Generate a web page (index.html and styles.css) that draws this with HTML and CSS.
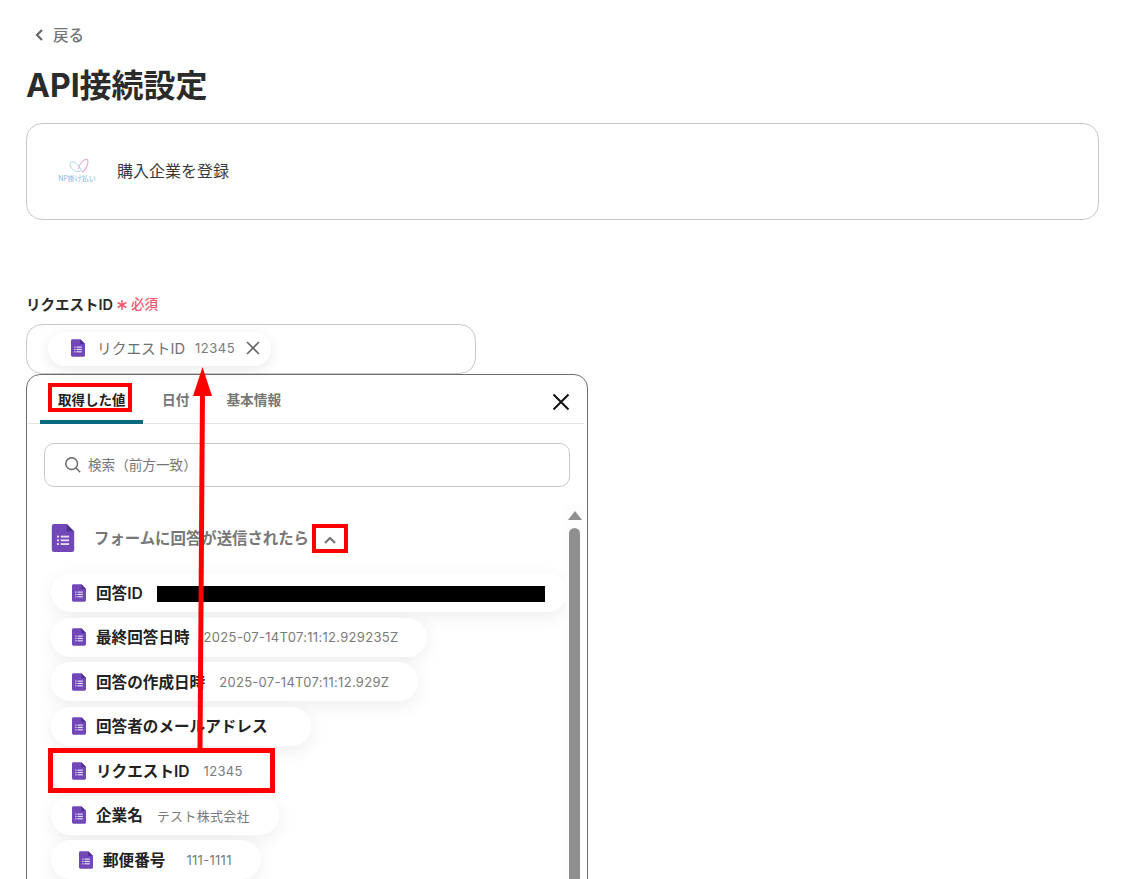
FILE: index.html
```html
<!DOCTYPE html>
<html lang="ja">
<head>
<meta charset="utf-8">
<title>API接続設定</title>
<link rel="stylesheet" href="styles.css">
</head>
<body>
<svg class="defs" width="0" height="0" aria-hidden="true">
  <symbol id="form" viewBox="0 0 24 30">
    <path d="M2.5 0H16l8 8v19.5a2.5 2.5 0 0 1-2.500 2.500h-19A2.500 2.500 0 0 1 0 27.500v-25A2.500 2.500 0 0 1 2.500 0z" fill="#7248b9"/>
    <path d="M16 0l8 8h-8z" fill="#4f2f8f"/>
    <g fill="#e6dcf5"><rect x="5.500" y="12.500" width="2.200" height="2"/><rect x="9.500" y="12.500" width="9" height="2"/><rect x="5.500" y="16.500" width="2.200" height="2"/><rect x="9.500" y="16.500" width="9" height="2"/><rect x="5.500" y="20.500" width="2.200" height="2"/><rect x="9.500" y="20.500" width="9" height="2"/></g>
  </symbol>
</svg>
<main class="page">
  <a class="back"><svg class="back-icon" viewBox="0 0 10 14"><path d="M8 2L3 7l5 5" fill="none" stroke="#666" stroke-width="2.200"/></svg><span class="lift">戻る</span></a>
  <h1 class="title">API接続設定</h1>
  <section class="card">
    <div class="logo">
      <svg class="logo-mark" viewBox="0 0 32 20"><path d="M8 5c5-3 10 4 13 9 1 3-7 3-11-1C7 10 7 6 8 5z" fill="none" stroke="#a5d2ee" stroke-width="1.200"/><path d="M18 13c0-6 6-12 10-12 3 2 1 12-6 16" fill="none" stroke="#e8a7cf" stroke-width="1.300"/></svg>
      <span class="logo-text">NP掛け払い</span>
    </div>
    <span class="card-text lift">購入企業を登録</span>
  </section>

  <label class="field-label"><span class="lift-s">リクエストID</span><span class="req"><svg class="req-star" viewBox="0 0 10 10"><path d="M5 0v10M.7 2.500l8.600 5M9.300 2.500l-8.600 5" stroke="#f4566a" stroke-width="1.500" fill="none"/></svg><span class="lift-s">必須</span></span></label>
  <div class="input">
    <div class="chip">
      <svg class="ic chip-ic"><use href="#form"/></svg>
      <span class="chip-name">リクエストID</span>
      <span class="chip-val">12345</span>
      <svg class="chip-x" viewBox="0 0 14 14"><path d="M1 1l12 12M13 1L1 13" stroke="#666" stroke-width="1.600" fill="none"/></svg>
    </div>
  </div>

  <section class="pop">
    <div class="tabs">
      <span class="tab tab-on"><span class="lift">取得した値</span></span>
      <span class="tab"><span class="lift">日付</span></span>
      <span class="tab"><span class="lift">基本情報</span></span>
      <svg class="close" viewBox="0 0 18 18"><path d="M1.500 1.500l15 15M16.500 1.500l-15 15" stroke="#111" stroke-width="2" fill="none"/></svg>
    </div>
    <div class="search">
      <svg class="search-ic" viewBox="0 0 20 20"><circle cx="8.500" cy="8.500" r="6.500" fill="none" stroke="#666" stroke-width="1.600"/><path d="M13.300 13.300L18 18" stroke="#666" stroke-width="1.600"/></svg>
      <span class="lift-s">検索（前方一致）</span>
    </div>
    <div class="body">
      <div class="list">
        <div class="group">
          <svg class="group-ic"><use href="#form"/></svg>
          <span class="group-name lift-s">フォームに回答が送信されたら</span>
          <svg class="chev" viewBox="0 0 14 9"><path d="M2 7l5-5 5 5" fill="none" stroke="#777" stroke-width="2.200"/></svg>
        </div>
        <div class="row"><svg class="ic"><use href="#form"/></svg><b>回答ID</b><i class="redact"></i></div>
        <div class="row"><svg class="ic"><use href="#form"/></svg><b>最終回答日時</b><span class="val">2025-07-14T07:11:12.929235Z</span></div>
        <div class="row"><svg class="ic"><use href="#form"/></svg><b>回答の作成日時</b><span class="val">2025-07-14T07:11:12.929Z</span></div>
        <div class="row"><svg class="ic"><use href="#form"/></svg><b>回答者のメールアドレス</b><span class="val"></span></div>
        <div class="row"><svg class="ic"><use href="#form"/></svg><b>リクエストID</b><span class="val">12345</span></div>
        <div class="row"><svg class="ic"><use href="#form"/></svg><b>企業名</b><span class="val">テスト株式会社</span></div>
        <div class="row row-wide"><svg class="ic"><use href="#form"/></svg><b>郵便番号</b><span class="val">111-1111</span></div>
      </div>
      <div class="scroll"><i class="scroll-up"></i><i class="thumb"></i></div>
    </div>
  </section>

  <div class="mark mark-tab"></div>
  <div class="mark mark-chev"></div>
  <div class="mark mark-row"></div>
  <svg class="arrow" viewBox="0 0 30 400"><path d="M14 383L16.500 25" stroke="#f00" stroke-width="5" fill="none"/><path d="M16.500 0L26 29H7z" fill="#f00"/></svg>
</main>
</body>
</html>
```
FILE: styles.css
```css
* { box-sizing: border-box; }
html, body { margin: 0; height: 879px; overflow: hidden; background: #fff; }
body { font-family: Inter, "Noto Sans CJK JP", sans-serif; color: #2b2b2b; }
.defs { position: absolute; }
.page { position: relative; height: 879px; overflow: hidden; padding: 24px 32px 0 26px; }
.lift { padding-bottom: 3px; }
.lift-s { padding-bottom: 2px; }

.back { display: flex; align-items: center; height: 22px; font-size: 15.500px; font-weight: 500; color: #757575; padding-left: 8px; }
.back-icon { width: 10px; height: 14px; margin-right: 9px; }
.title { margin: 14px 0 0; height: 52px; font-size: 32px; line-height: 52px; font-weight: 700; color: #2b2b2b; }

.card { display: flex; align-items: center; height: 97px; margin-top: 11px; border: 1px solid #c9c9c9; border-radius: 16px; padding-left: 28px; }
.logo { display: flex; flex-direction: column; align-items: center; width: 44px; margin-top: -2px; }
.logo-mark { width: 26px; height: 17px; }
.logo-text { font-size: 7px; line-height: 8px; color: #7fb8e6; white-space: nowrap; }
.card-text { margin-left: 18px; font-size: 16px; color: #3a3a3a; }

.field-label { display: flex; align-items: center; height: 20px; margin-top: 74px; font-size: 14.500px; font-weight: 600; color: #2b2b2b; }
.req { display: flex; align-items: center; margin-left: 4px; font-size: 13.500px; font-weight: 500; color: #f4566a; }
.req-star { width: 10px; height: 10px; margin: 2px 4px 0 0; }

.input { width: 450px; height: 50px; margin-top: 10px; border: 1px solid #c9c9c9; border-radius: 16px; padding: 7px 0 0 21px; }
.chip { display: inline-flex; align-items: center; height: 34px; width: 223px; padding-left: 23px; border-radius: 17px; background: #fff; box-shadow: 0 3px 14px rgba(0,0,0,.09); }
.chip-ic { margin-bottom: 2px; }
.chip-name { margin-left: 12px; padding-bottom: 3px; font-size: 14.700px; color: #6f6f6f; }
.chip-val { margin-left: 10px; padding-bottom: 3px; font-size: 13px; color: #7a7a7a; letter-spacing: .5px; }
.chip-x { width: 14px; height: 14px; margin: 0 0 2px 11px; }
.ic { width: 14px; height: 18px; flex: none; }

.pop { width: 562px; height: 560px; border: 1px solid #6e6e6e; border-radius: 14px; background: #fff; padding-top: 1px; }
.tabs { position: relative; display: flex; height: 48px; margin: 0 3px 0 1px; border-bottom: 1px solid #e4e4e4; padding-left: 12px; }
.tab { display: flex; align-items: center; height: 48px; padding: 1px 18px 0 19px; font-size: 13.700px; font-weight: 600; color: #777; }
.tab-on { width: 103px; color: #222; font-size: 13.500px; border-bottom: 4px solid #0a687f; border-radius: 4px 4px 0 0; padding: 4px 0 0 18px; }
.close { position: absolute; top: 17px; right: 14px; width: 18px; height: 18px; }

.search { display: flex; align-items: center; width: 526px; height: 44px; margin: 19px 0 0 17px; border: 1px solid #c9c9c9; border-radius: 10px; padding-left: 19px; font-size: 13.600px; color: #777; }
.search-ic { width: 18px; height: 18px; margin-right: 6px; }

.body { display: flex; margin-top: 18px; }
.list { flex: 1; min-width: 0; padding: 18px 0 0 24px; }
.group { display: flex; align-items: center; height: 30px; margin-bottom: 20px; }
.group-ic { width: 24px; height: 28px; }
.group-name { margin-left: 19px; font-size: 15.400px; font-weight: 600; color: #777; }
.chev { width: 14px; height: 9px; margin-left: 14px; margin-top: 4px; }

.row { display: flex; align-items: center; width: max-content; height: 39px; margin-bottom: 5.500px; padding: 0 29px 0 21px; border-radius: 20px; background: #fff; box-shadow: 0 5px 18px rgba(0,0,0,.07); }
.row b { margin-left: 10px; padding-bottom: 2px; font-size: 15.600px; font-weight: 600; color: #222; }
.val { margin-left: 14px; font-size: 13px; color: #7a7a7a; letter-spacing: .3px; }
.row-wide { padding-left: 28px; }
.row-wide .val { margin-left: 21px; }
.redact { display: block; width: 388px; height: 16px; margin: 2px -7px 0 14px; background: #000; }

.scroll { position: relative; flex: none; width: 19px; margin-right: 3px; background: #fdfdfd; }
.scroll-up { position: absolute; top: 6px; left: 3px; border: 7px solid transparent; border-top: 0; border-bottom: 9px solid #8f8f8f; }
.thumb { position: absolute; top: 23px; left: 4px; width: 11px; height: 400px; border-radius: 6px; background: #8f8f8f; }

.mark { position: absolute; border: 4px solid #f00; }
.mark-tab { left: 48px; top: 383px; width: 84px; height: 29px; }
.mark-chev { left: 312px; top: 524px; width: 36px; height: 29px; }
.mark-row { left: 48px; top: 748px; width: 227px; height: 45px; border-width: 5px; }
.arrow { position: absolute; left: 186px; top: 367px; width: 30px; height: 400px; }
```
